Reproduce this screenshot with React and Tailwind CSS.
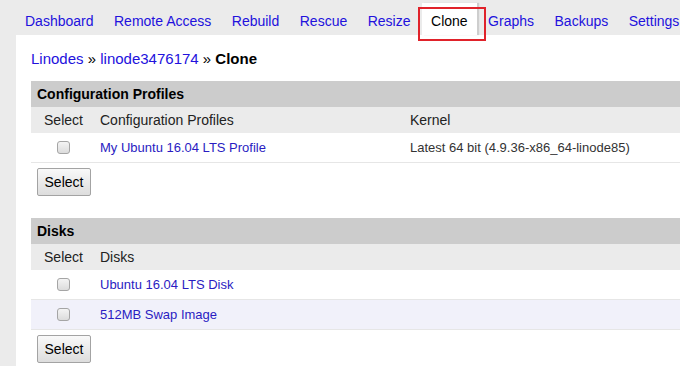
const tabs = ['Dashboard', 'Remote Access', 'Rebuild', 'Rescue', 'Resize', 'Clone', 'Graphs', 'Backups', 'Settings'];

function Checkbox() {
  return (
    <span className="inline-block w-[13px] h-[13px] rounded-[3px] border border-[#a5a5a5] bg-gradient-to-b from-[#f4f4f4] to-[#dcdcdc] align-middle" />
  );
}

function SelectButton() {
  return (
    <button className="ml-[6px] w-[54px] h-[28px] rounded-[2px] border border-[#a3a3a3] bg-gradient-to-b from-[#f9f9f9] to-[#dddddd] text-[14px] text-black">
      Select
    </button>
  );
}

function Section({ title, col2, col3, rows, top }) {
  return (
    <div className={top}>
      <div className="h-[26px] bg-[#cccccc] pl-[6px] flex items-center font-bold text-[14px] text-black">{title}</div>
      <div className="h-[26px] bg-[#ebebeb] flex items-center text-[14px] text-[#222]">
        <div className="w-[65px] text-center">Select</div>
        <div className="w-[310px] pl-[4px]">{col2}</div>
        {col3 && <div className="pl-[4px]">{col3}</div>}
      </div>
      {rows.map((r, i) => (
        <div key={i} className={`h-[30px] border-b border-[#e6e6e6] flex items-center text-[13px] ${i % 2 ? 'bg-[#f1f1fa]' : 'bg-white'}`}>
          <div className="w-[65px] flex justify-center"><Checkbox /></div>
          <div className="w-[310px] pl-[4px] text-[#2a1cc2]">{r[0]}</div>
          {r[1] && <div className="pl-[4px] text-[#333]">{r[1]}</div>}
        </div>
      ))}
      <div className="mt-[5px]"><SelectButton /></div>
    </div>
  );
}

export default function App() {
  return (
    <div className="relative w-[680px] h-[366px] overflow-hidden bg-[#ebebeb] font-['Liberation_Sans',Arial,sans-serif]">
      <nav className="flex pl-[16px] pt-[3px] h-[35px] whitespace-nowrap text-[14px] gap-[2.5px]">
        {tabs.map(t => (
          t === 'Clone' ? (
            <span key={t} className="h-[32px] px-[9px] pt-[10px] leading-[16px] bg-white text-black shadow-[2px_0_1px_rgba(0,0,0,0.12)]">{t}</span>
          ) : (
            <span key={t} className="h-[32px] px-[9px] pt-[10px] leading-[16px] text-[#2211dd]">{t}</span>
          )
        ))}
      </nav>
      <div className="ml-[16px] w-[760px] bg-white px-[15px] pt-[15px] pb-[20px]">
        <div className="text-[15px] leading-[18px] text-black">
          <span className="text-[#2211dd]">Linodes</span> » <span className="text-[#2211dd]">linode3476174</span> » <span className="font-bold">Clone</span>
        </div>
        <Section
          top="mt-[13px]"
          title="Configuration Profiles"
          col2="Configuration Profiles"
          col3="Kernel"
          rows={[['My Ubuntu 16.04 LTS Profile', 'Latest 64 bit (4.9.36-x86_64-linode85)']]}
        />
        <Section
          top="mt-[22px]"
          title="Disks"
          col2="Disks"
          rows={[['Ubuntu 16.04 LTS Disk'], ['512MB Swap Image']]}
        />
      </div>
      <div className="absolute left-[418px] top-[7px] w-[68px] h-[34px] border-2 border-[#e0222a]" />
    </div>
  );
}
